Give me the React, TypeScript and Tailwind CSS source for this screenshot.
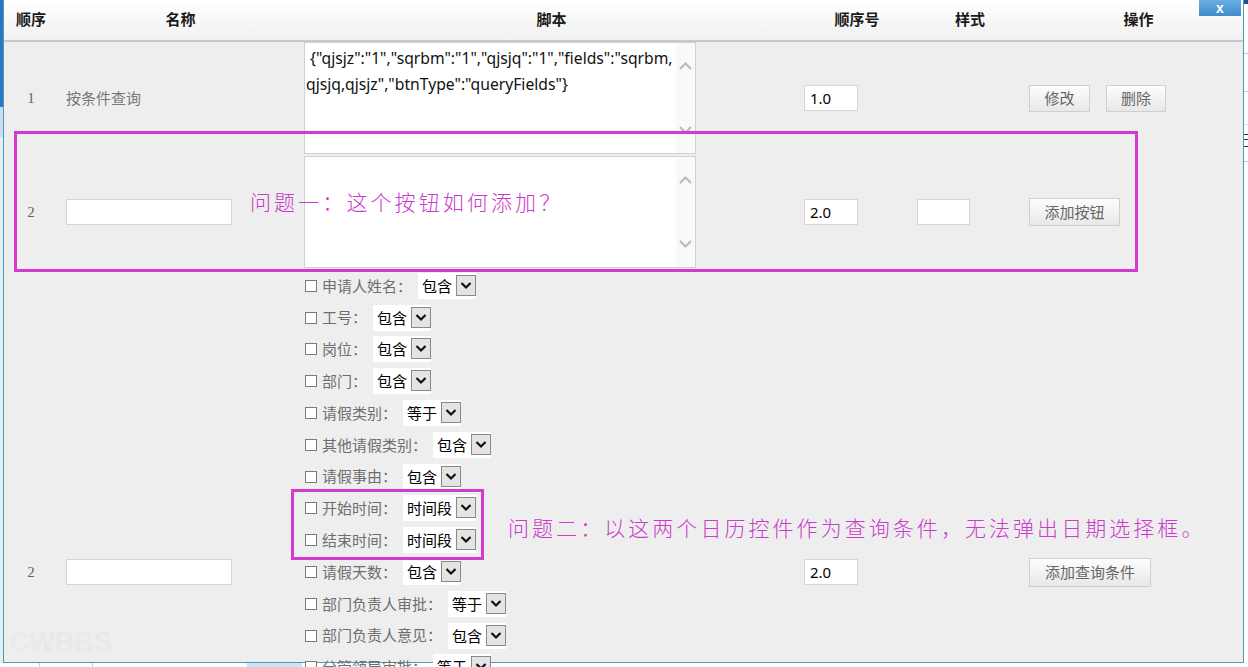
import React from "react";

type Cond = [string, string];

const conditions: Cond[] = [
  ["申请人姓名", "包含"],
  ["工号", "包含"],
  ["岗位", "包含"],
  ["部门", "包含"],
  ["请假类别", "等于"],
  ["其他请假类别", "包含"],
  ["请假事由", "包含"],
  ["开始时间", "时间段"],
  ["结束时间", "时间段"],
  ["请假天数", "包含"],
  ["部门负责人审批", "等于"],
  ["部门负责人意见", "包含"],
  ["分管领导审批", "等于"],
  ["分管领导意见", "包含"],
  ["总经理审批", "等于"],
  ["总经理意见", "包含"],
  ["人事审批", "等于"],
  ["人事意见", "包含"],
  ["备注", "包含"],
];

function ScrollChevron({ up }: { up?: boolean }) {
  return (
    <svg width="13" height="8" viewBox="0 0 13 8">
      <polyline
        points={up ? "1,7 6.5,1.5 12,7" : "1,1 6.5,6.5 12,1"}
        fill="none"
        stroke="#b9b9b9"
        strokeWidth="2"
      />
    </svg>
  );
}

function ScriptBox({ lines }: { lines?: string[] }) {
  return (
    <div className="flex h-[112px] w-[392px] border border-[#d0d0d0] bg-white">
      <div className="flex-1 pl-px pt-[2px] font-['Noto_Sans','Noto_Sans_CJK_SC',sans-serif] text-[15.7px] leading-[26px] text-[#111]">
        {lines?.map((l) => (
          <div key={l} className="whitespace-pre">
            {l}
          </div>
        ))}
      </div>
      <div className="flex w-[19px] flex-col items-center justify-between bg-[#f9f9f9] py-[19px]">
        <ScrollChevron up />
        <ScrollChevron />
      </div>
    </div>
  );
}

function TextInput({ value, w }: { value?: string; w: string }) {
  return (
    <div
      className={`h-[26px] border border-[#d6d6d6] bg-white px-[5px] font-['Noto_Sans','Noto_Sans_CJK_SC',sans-serif] text-[15px] leading-[25px] text-black ${w}`}
    >
      {value}
    </div>
  );
}

function Btn({ label, w }: { label: string; w: string }) {
  return (
    <div
      className={`flex h-[27px] items-center justify-center border border-[#cfcfcf] bg-linear-to-b from-[#fdfdfd] to-[#e8e8e8] text-[15px] text-[#666] ${w}`}
    >
      {label}
    </div>
  );
}

function Select({ value }: { value: string }) {
  return (
    <div className="ml-[6px] flex h-[26px] items-start bg-white pt-[2px]">
      <span className="px-[4px] text-[15px] leading-[22px] text-black">{value}</span>
      <span className="flex h-[21px] w-[20px] items-center justify-center border border-[#8a8a8a] bg-[#e4e4e4]">
        <svg width="12" height="9" viewBox="0 0 12 9">
          <polyline points="1.5,2 6,6.5 10.5,2" fill="none" stroke="#111" strokeWidth="2.2" />
        </svg>
      </span>
    </div>
  );
}

function Condition({ label, op }: { label: string; op: string }) {
  return (
    <div className="flex h-[31.8px] items-center">
      <span className="h-[12px] w-[12px] border border-[#7a7a7a] bg-white" />
      <span className="ml-[5px] text-[15px] text-[#6e6e6e]">{label}：</span>
      <Select value={op} />
    </div>
  );
}

const cols = "grid grid-cols-[54px_242px_500px_114px_112px_1fr] items-center";

export default function App() {
  return (
    <div className="relative h-[667px] w-[1248px] overflow-hidden bg-white font-['Noto_Sans_CJK_SC','Noto_Sans',sans-serif]">
      {/* page behind the dialog: left edge */}
      <div className="absolute left-0 top-0 flex h-full w-[3px] flex-col">
        <div className="h-[107px] bg-[#2a76c4]" />
        <div className="h-[30px] bg-[#c9def0]" />
        <div className="flex-1 bg-[#e3eef6]" />
      </div>
      {/* page behind the dialog: right edge */}
      <div className="absolute right-0 top-0 h-full w-[5px] bg-white">
        <div className="h-[4px] bg-[#1f4f8f]" />
        <div className="mt-[49px] h-px bg-[#c8c8c8]" />
        <div className="mt-[37px] h-px bg-[#c8c8c8]" />
        <div className="mt-[32px] h-px bg-[#dddddd]" />
        <div className="mt-[9px] h-px bg-[#333]" />
        <div className="mt-[4px] h-px bg-[#333]" />
        <div className="mt-[6px] h-px bg-[#333]" />
        <div className="mt-[14px] h-px bg-[#c8c8c8]" />
      </div>
      {/* page behind the dialog: bottom edge */}
      <div className="absolute bottom-0 left-0 flex h-[4px] w-full bg-white">
        <div className="ml-[39px] h-full w-px bg-[#cfcfcf]" />
        <div className="ml-[52px] h-full w-px bg-[#cfcfcf]" />
        <div className="ml-[154px] h-full w-[55px] bg-[#cde4f5]" />
        <div className="ml-[140px] h-full w-px bg-[#cfcfcf]" />
      </div>

      {/* dialog window */}
      <div className="absolute left-[3px] top-0 h-[663px] w-[1241px] border-x border-b border-[#4d9bb3] bg-[#eeeeee]">
        {/* column header */}
        <div
          className={`${cols} h-[42px] border-b-2 border-[#c6c9d5] bg-linear-to-b from-[#ffffff] to-[#f1f1f1] pb-[2px] text-[15px] font-bold text-[#1a1a1a]`}
        >
          <div className="text-center">顺序</div>
          <div className="pl-[3px] text-center">名称</div>
          <div className="pl-[3px] text-center">脚本</div>
          <div className="text-center">顺序号</div>
          <div className="text-center">样式</div>
          <div className="pl-[8px] text-center">操作</div>
        </div>

        {/* row 1 */}
        <div className={`${cols} h-[112px]`}>
          <div className="text-center font-['Liberation_Serif',serif] text-[15px] text-[#666]">1</div>
          <div className="pl-[8px] text-[15px] text-[#777]">按条件查询</div>
          <div className="pl-[4px]">
            <ScriptBox
              lines={[
                ' {"qjsjz":"1","sqrbm":"1","qjsjq":"1","fields":"sqrbm,',
                'qjsjq,qjsjz","btnType":"queryFields"}',
              ]}
            />
          </div>
          <div className="pl-[4px]">
            <TextInput value="1.0" w="w-[54px]" />
          </div>
          <div />
          <div className="flex gap-[16px] pl-[3px]">
            <Btn label="修改" w="w-[61px]" />
            <Btn label="删除" w="w-[60px]" />
          </div>
        </div>

        {/* row 2 */}
        <div className={`${cols} mt-[2px] h-[112px]`}>
          <div className="text-center font-['Liberation_Serif',serif] text-[15px] text-[#666]">2</div>
          <div className="pl-[8px]">
            <TextInput w="w-[166px]" />
          </div>
          <div className="pl-[4px]">
            <ScriptBox />
          </div>
          <div className="pl-[4px]">
            <TextInput value="2.0" w="w-[54px]" />
          </div>
          <div className="pl-[3px]">
            <TextInput w="w-[53px]" />
          </div>
          <div className="pl-[3px]">
            <Btn label="添加按钮" w="w-[91px] h-[28px]" />
          </div>
        </div>

        {/* row 3 */}
        <div className={`${cols} mt-[2px]`}>
          <div className="text-center font-['Liberation_Serif',serif] text-[15px] text-[#666]">2</div>
          <div className="pl-[8px]">
            <TextInput w="w-[166px]" />
          </div>
          <div className="flex flex-col pl-[5px]">
            {conditions.map(([label, op]) => (
              <Condition key={label} label={label} op={op} />
            ))}
          </div>
          <div className="pl-[4px]">
            <TextInput value="2.0" w="w-[54px]" />
          </div>
          <div />
          <div className="pl-[3px]">
            <Btn label="添加查询条件" w="w-[122px] h-[29px]" />
          </div>
        </div>

        {/* close button */}
        <div className="absolute left-[1195px] top-0 flex h-[16px] w-[42px] items-center justify-center bg-linear-to-b from-[#6aaee0] to-[#3f8ccc] font-['Liberation_Sans',sans-serif] text-[14px] font-bold leading-none text-white">
          x
        </div>

        {/* watermark */}
        <div className="absolute left-[6px] top-[629px] font-['Liberation_Sans',sans-serif] text-[27px] font-bold leading-none text-[#e9e9e9]">
          CWBBS
        </div>

        {/* annotation 1 */}
        <div className="absolute left-[10px] top-[131px] h-[141px] w-[1124px] border-[3px] border-[#d23ad2]" />
        <div className="absolute left-[246px] top-[186px] text-[21px] font-light leading-[30px] tracking-[3.1px] text-[#c93bcb]">
          问题一：这个按钮如何添加？
        </div>

        {/* annotation 2 */}
        <div className="absolute left-[287px] top-[489px] h-[71px] w-[193px] border-[3px] border-[#d23ad2]" />
        <div className="absolute left-[504px] top-[512px] text-[21px] font-light leading-[30px] tracking-[3.05px] text-[#c93bcb]">
          问题二：以这两个日历控件作为查询条件，无法弹出日期选择框。
        </div>
      </div>
    </div>
  );
}
